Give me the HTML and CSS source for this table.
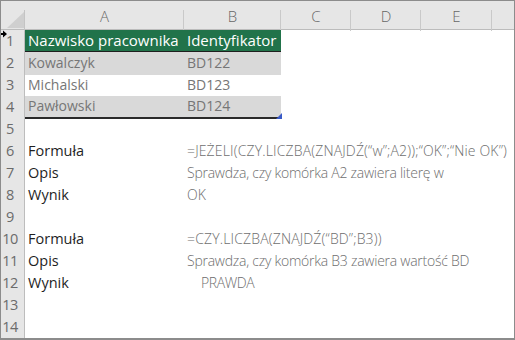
FILE: index.html
```html
<!DOCTYPE html>
<html lang="pl">
<head>
<meta charset="utf-8">
<title>Arkusz</title>
<link rel="stylesheet" href="styles.css">
</head>
<body>
<div class="sheet">
  <div class="row head">
    <div class="corner"><svg class="tri" width="24" height="28" viewBox="0 0 24 28"><polygon points="6,27 23,27 23,11" fill="#cfcfcf"/></svg></div>
    <div class="colh">A</div>
    <div class="colh">B</div>
    <div class="colh">C</div>
    <div class="colh">D</div>
    <div class="colh">E</div>
    <div class="colh last"></div>
  </div>
  <div class="row r1"><div class="num">1</div><div class="cell th">Nazwisko pracownika</div><div class="cell th">Identyfikator</div></div>
  <div class="row band"><div class="num">2</div><div class="cell d">Kowalczyk</div><div class="cell d">BD122</div></div>
  <div class="row"><div class="num">3</div><div class="cell d">Michalski</div><div class="cell d">BD123</div></div>
  <div class="row band end"><div class="num">4</div><div class="cell d">Pawłowski</div><div class="cell d">BD124</div></div>
  <div class="row"><div class="num">5</div></div>
  <div class="row"><div class="num">6</div><div class="cell lab">Formuła</div><div class="cell val wide fx">=JEŻELI(CZY.LICZBA(ZNAJDŹ(“w”;A2));“OK”;“Nie OK”)</div></div>
  <div class="row"><div class="num">7</div><div class="cell lab">Opis</div><div class="cell val wide desc">Sprawdza, czy komórka A2 zawiera literę w</div></div>
  <div class="row"><div class="num">8</div><div class="cell lab">Wynik</div><div class="cell val wide">OK</div></div>
  <div class="row"><div class="num">9</div></div>
  <div class="row"><div class="num">10</div><div class="cell lab">Formuła</div><div class="cell val wide fx">=CZY.LICZBA(ZNAJDŹ(“BD”;B3))</div></div>
  <div class="row"><div class="num">11</div><div class="cell lab">Opis</div><div class="cell val wide desc">Sprawdza, czy komórka B3 zawiera wartość BD</div></div>
  <div class="row"><div class="num">12</div><div class="cell lab">Wynik</div><div class="cell val wide indent">PRAWDA</div></div>
  <div class="row"><div class="num">13</div></div>
  <div class="row"><div class="num">14</div></div>
  <svg class="cursor" width="8" height="8" viewBox="0 0 8 8"><path d="M0 3h3V0.5L7 4 3 7.5V5H0z" fill="#000"/></svg>
  <svg class="handle" width="6" height="6" viewBox="0 0 6 6"><polygon points="0,6 6,6 6,0" fill="#3a5bc7"/></svg>
</div>
</body>
</html>
```
FILE: styles.css
```css
* { box-sizing: border-box; }
html, body { margin: 0; padding: 0; background: #fff; }
.sheet {
  position: relative;
  width: 515px;
  height: 340px;
  border: 1px solid #8c8c8c;
  border-bottom-width: 2px;
  overflow: hidden;
  font-family: "Open Sans", "Noto Sans", sans-serif;
  font-size: 14px;
}
.row {
  display: grid;
  grid-template-columns: 24px 159px 97px 70px 70px 71px 1fr;
  height: 22px;
  line-height: 22px;
}
.row.head {
  height: 29px;
  background: #e6e6e6;
  border-bottom: 1px solid #bcbcbc;
}
.corner {
  position: relative;
  background: linear-gradient(#c4c4c4, #c4c4c4) right bottom / 1px 21px no-repeat;
}
.tri { display: block; }
.colh {
  text-align: center;
  color: #666;
  font-size: 15px;
  line-height: 30px;
  font-weight: 300;
  background: linear-gradient(#c9c9c9, #c9c9c9) right bottom / 1px 21px no-repeat;
}
.colh.last { background: none; }
.num {
  background: #e6e6e6;
  border-right: 1px solid #bdbdbd;
  border-bottom: 1px solid #cdcdcd;
  color: #6b6b6b;
  font-size: 14.5px;
  text-align: center;
  padding-right: 5px;
  letter-spacing: -0.5px;
}
.cell {
  padding-left: 3px;
  white-space: nowrap;
  overflow: visible;
}
.th {
  background: #21734a;
  color: #fff;
  font-size: 15px;
  border-bottom: 2px solid #1f1f1f;
  line-height: 20px;
}
.d { color: #767676; font-size: 14px; }
.band .d { background: #d9d9d9; }
.end .d { border-bottom: 2px solid #2a2a2a; line-height: 20px; }
.lab { color: #1f1f1f; font-size: 14.5px; }
.val { color: #6e6e6e; font-size: 14px; font-weight: 300; }
.fx { letter-spacing: 0.15px; }
.desc { letter-spacing: -0.25px; }
.wide { grid-column: 3 / -1; }
.indent { padding-left: 17px; letter-spacing: -0.4px; }
.cursor { position: absolute; left: -1px; top: 29px; }
.handle { position: absolute; left: 275px; top: 112px; }
```
